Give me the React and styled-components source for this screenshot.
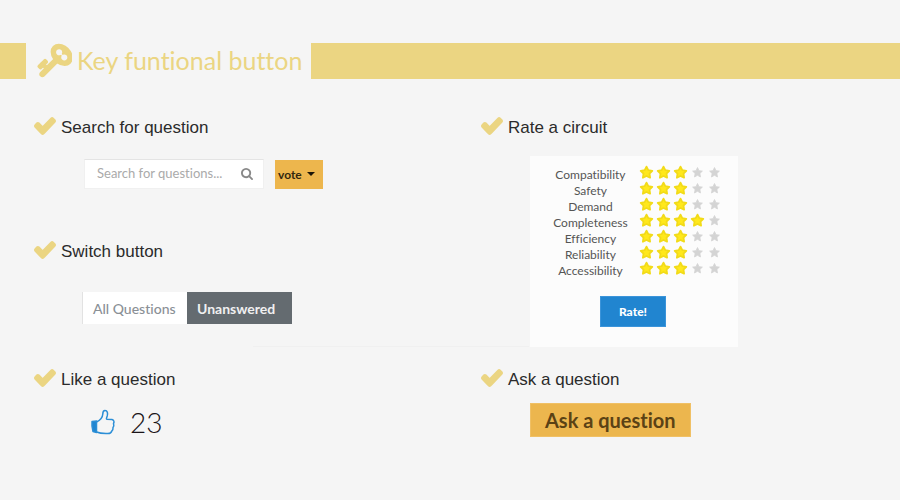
import React, { useState } from "react";
import styled, { createGlobalStyle } from "styled-components";

const GlobalStyle = createGlobalStyle`
  *, *::before, *::after { box-sizing: border-box; }
  body {
    margin: 0;
    background: #f5f5f5;
    color: #2b2b2b;
    font-family: Lato, "Liberation Sans", sans-serif;
    font-variant-ligatures: none;
  }
  button, input { font-family: inherit; font-variant-ligatures: none; }
`;

const Page = styled.main`
  padding-top: 43px;
`;

const Band = styled.header`
  display: flex;
  height: 36px;
  padding-left: 26px;
  background: #ebd582;
`;

const Title = styled.h1`
  display: flex;
  align-items: center;
  gap: 5px;
  margin: 0;
  padding: 0 9px 2px 10px;
  background: #f5f5f5;
  color: #ebd582;
  font-size: 25px;
  font-weight: 400;
  line-height: 34px;
  white-space: nowrap;
`;

const KeyIcon = styled.svg`
  width: 36px;
  height: 36px;
  fill: currentColor;
  stroke: currentColor;
  stroke-width: 80;
  stroke-linejoin: round;
`;

const Content = styled.div`
  display: grid;
  grid-template-columns: minmax(0, 16fr) minmax(0, 15fr);
  row-gap: 20px;
  padding: 36px 0 0 34px;
`;

const Column = styled.div`
  display: flex;
  flex-direction: column;
  align-items: flex-start;
`;

const Section = styled.section`
  display: flex;
  flex-direction: column;
  align-items: flex-start;
  height: ${(p) => p.$height || "auto"};
`;

const SectionTitle = styled.h2`
  display: flex;
  align-items: center;
  gap: 5px;
  margin: 0;
  font-family: "Liberation Sans", sans-serif;
  font-size: 17px;
  font-weight: 400;
  line-height: 26px;
  white-space: nowrap;
`;

const CheckIcon = styled.svg`
  width: 22px;
  height: 18px;
  margin-bottom: 4px;
  fill: #ebd582;
  stroke: #ebd582;
  stroke-width: 130;
  stroke-linejoin: round;
`;

const Controls = styled.div`
  display: flex;
  align-items: center;
  gap: ${(p) => p.$gap || "0"};
  margin: ${(p) => p.$top} 0 0 ${(p) => p.$left};
`;

const SearchBox = styled.div`
  display: flex;
  align-items: center;
  width: 180px;
  height: 30px;
  padding-right: 10px;
  background: #fff;
  border: 1px solid #f0f0f0;
  border-top-color: #e4e4e4;
`;

const SearchInput = styled.input`
  flex: 1;
  min-width: 0;
  padding: 0 0 2px 12px;
  border: 0;
  outline: 0;
  background: transparent;
  color: #555;
  font-size: 13px;
  &::placeholder { color: #aaa; opacity: 1; }
`;

const SearchButton = styled.button`
  display: flex;
  padding: 0;
  border: 0;
  background: transparent;
  svg { width: 12px; height: 12px; fill: #888; }
`;

const VoteButton = styled.button`
  display: flex;
  align-items: center;
  gap: 5px;
  width: 48px;
  height: 29px;
  padding: 0 3px;
  border: 0;
  background: #edb64d;
  color: #33280f;
  font-size: 12px;
  font-weight: 700;
  svg { width: 8px; height: 4px; fill: #1c1608; }
`;

const Toggle = styled.button`
  height: 32px;
  padding: 0 10px;
  border: 0;
  border-left: ${(p) => (p.$active ? "0" : "1px solid #e2e2e2")};
  width: 105px;
  background: ${(p) => (p.$active ? "#646b70" : "#fff")};
  color: ${(p) => (p.$active ? "#f0f0f0" : "#8a9096")};
  font-size: 14px;
  font-weight: ${(p) => (p.$active ? 700 : 500)};
  text-align: left;
  white-space: nowrap;
`;

const LikeButton = styled.button`
  display: flex;
  padding: 0;
  border: 0;
  background: transparent;
  svg { width: 26px; height: 26px; }
`;

const LikeCount = styled.output`
  color: #1a1418;
  font-size: 28px;
  font-weight: 300;
  line-height: 34px;
`;

const Divider = styled.hr`
  width: 276px;
  height: 1px;
  margin: 0 0 0 219px;
  border: 0;
  background: #f0f0f0;
`;

const RateCard = styled.form`
  display: flex;
  flex-direction: column;
  align-items: center;
  gap: 19px;
  width: 208px;
  height: 191px;
  margin: 15px 0 0 49px;
  padding: 9px 15px 0 13px;
  background: #fcfcfc;
`;

const RateTable = styled.table`
  width: 100%;
  border-collapse: collapse;
  tr { height: 16px; }
  td, th { padding: 0; }
`;

const Criterion = styled.th`
  width: 95px;
  color: #555;
  font-size: 12px;
  font-weight: 400;
  line-height: 16px;
  text-align: center;
  > span { display: block; height: 16px; padding-top: 2px; }
`;

const Stars = styled.div`
  display: flex;
  justify-content: flex-end;
  height: 16px;
`;

const StarLabel = styled.label`
  display: grid;
  width: 17px;
  height: 15px;
  place-items: center;
  > * { grid-area: 1 / 1; }
  svg { width: 15px; height: 15px; }
`;

const StarRadio = styled.input`
  appearance: none;
  width: 15px;
  height: 15px;
  margin: 0;
`;

const RateButton = styled.button`
  width: 66px;
  height: 31px;
  border: 1px solid #3b94da;
  background: #2185d0;
  color: #fff;
  font-size: 12px;
  font-weight: 900;
`;

const AskButton = styled.button`
  height: 34px;
  padding: 0 14px;
  border: 1px solid #f0c065;
  background: #ecb64e;
  color: #5b4215;
  font-size: 20px;
  font-weight: 700;
  white-space: nowrap;
`;

function Heading({ children }) {
  return (
    <SectionTitle>
      <CheckIcon viewBox="56 269 1680 1318" preserveAspectRatio="none" aria-hidden="true">
        <path d="M1671 566q0 40-28 68l-724 724-136 136q-28 28-68 28t-68-28l-136-136-362-362q-28-28-28-68t28-68l136-136q28-28 68-28t68 28l294 295 656-657q28-28 68-28t68 28l136 136q28 28 28 68z" />
      </CheckIcon>
      {children}
    </SectionTitle>
  );
}

function Star({ on }) {
  return (
    <svg viewBox="0 0 15 15" aria-hidden="true">
      <path
        d={
          on
            ? "M7.500 1.600 9.300 5.100 13.300 5.800 10.500 8.700 11.100 12.700 7.500 11 3.900 12.700 4.500 8.700 1.700 5.800 5.700 5.100Z"
            : "M7.500 2.500 9 5.700 12.400 6.100 9.900 8.500 10.500 12 7.500 10.300 4.500 12 5.100 8.500 2.600 6.100 6 5.700Z"
        }
        fill={on ? "#ffe81c" : "#d4d4d4"}
        stroke={on ? "#f2db18" : "#d4d4d4"}
        strokeWidth={on ? 1.800 : 0.800}
        strokeLinejoin="round"
      />
    </svg>
  );
}

const initialRatings = {
  Compatibility: 3,
  Safety: 3,
  Demand: 3,
  Completeness: 4,
  Efficiency: 3,
  Reliability: 3,
  Accessibility: 3,
};

export default function App() {
  const [ratings, setRatings] = useState(initialRatings);
  const [filter, setFilter] = useState("Unanswered");
  return (
    <Page>
      <GlobalStyle />
      <Band>
        <Title>
          <KeyIcon viewBox="0 0 1792 1792" aria-hidden="true">
            <path
              transform="translate(1792 0) scale(-1 1)"
              d="M832 512q0-80-56-136t-136-56-136 56-56 136q0 42 19 83-41-19-83-19-80 0-136 56t-56 136 56 136 136 56 136-56 56-136q0-42-19-83 41 19 83 19 80 0 136-56t56-136zm851 704q0 17-49 66t-66 49q-9 0-28.500-16t-36.500-33-38.500-40-24.500-26l-96 96 220 220q28 28 28 68 0 42-39 81t-81 39q-40 0-68-28l-671-671q-176 131-365 131-163 0-265.500-102.500t-102.500-265.500q0-160 95-313t248-248 313-95q163 0 265.500 102.500t102.500 265.500q0 189-131 365l355 355 96-96q-3-3-26-24.500t-40-38.500-33-36.500-16-28.500q0-17 49-66t66-49q13 0 23 10 6 6 46 44.500t82 79.500 86.500 86 73 78 28.500 41z"
            />
          </KeyIcon>
          Key funtional button
        </Title>
      </Band>
      <Content>
        <Column>
          <Section $height="124px">
            <Heading>Search for question</Heading>
            <Controls $gap="11px" $top="18px" $left="50px">
              <SearchBox role="search">
                <SearchInput aria-label="Search for questions" placeholder="Search for questions..." />
                <SearchButton type="button" aria-label="Search">
                  <svg viewBox="64 128 1664 1664">
                    <path d="M1216 832q0-185-131.500-316.500t-316.500-131.500-316.500 131.500-131.500 316.500 131.500 316.500 316.500 131.500 316.500-131.500 131.500-316.500zm512 832q0 52-38 90t-90 38q-54 0-90-38l-343-342q-179 124-399 124-143 0-273.500-55.500t-225-150-150-225-55.500-273.500 55.500-273.500 150-225 225-150 273.500-55.500 273.500 55.500 225 150 150 225 55.500 273.500q0 220-124 399l343 343q37 37 37 90z" />
                  </svg>
                </SearchButton>
              </SearchBox>
              <VoteButton type="button" aria-haspopup="menu">
                vote
                <svg viewBox="0 0 8 4" aria-hidden="true">
                  <path d="M0 0H8L4 4Z" />
                </svg>
              </VoteButton>
            </Controls>
          </Section>
          <Section $height="107px">
            <Heading>Switch button</Heading>
            <Controls $top="27px" $left="48px">
              {["All Questions", "Unanswered"].map((name) => (
                <Toggle
                  key={name}
                  type="button"
                  $active={filter === name}
                  aria-pressed={filter === name}
                  onClick={() => setFilter(name)}
                >
                  {name}
                </Toggle>
              ))}
            </Controls>
          </Section>
          <Divider />
        </Column>
        <Section>
          <Heading>Rate a circuit</Heading>
          <RateCard onSubmit={(e) => e.preventDefault()}>
            <RateTable>
              <tbody>
                {Object.entries(ratings).map(([name, value]) => (
                  <tr key={name}>
                    <Criterion scope="row">
                      <span>{name}</span>
                    </Criterion>
                    <td>
                      <Stars role="radiogroup" aria-label={name}>
                        {[1, 2, 3, 4, 5].map((n) => (
                          <StarLabel key={n}>
                            <StarRadio
                              type="radio"
                              name={name}
                              value={n}
                              aria-label={`${n} of 5`}
                              checked={value === n}
                              onChange={() => setRatings({ ...ratings, [name]: n })}
                            />
                            <Star on={n <= value} />
                          </StarLabel>
                        ))}
                      </Stars>
                    </td>
                  </tr>
                ))}
              </tbody>
            </RateTable>
            <RateButton type="submit">Rate!</RateButton>
          </RateCard>
        </Section>
        <Column>
          <Section>
            <Heading>Like a question</Heading>
            <Controls $gap="14px" $top="12px" $left="56px">
              <LikeButton type="button" aria-label="Like">
                <svg viewBox="0 0 26 26" fill="none" stroke="#2b8ed6" strokeWidth="1.500" strokeLinejoin="round">
                  <path d="M2 12.500 6.500 12V23.500L3 22.500Q1.500 17 2 12.500Z" fill="#2185d0" />
                  <path d="M6.500 13C10 11.500 12.500 9 12.800 5 12.800 2.500 13.500 1.500 15 1.500 17.500 1.500 18 4.500 17.200 7 16.500 9 16 10 17 10.200L22 10.500C24 11 24.500 13 23.500 14.500 24 16 24 17.500 23 18.500 23.200 20.500 22.800 21.500 21.800 22 21.300 24 20 24.500 18 24.500 13 24.700 10 24.500 6.500 23" />
                </svg>
              </LikeButton>
              <LikeCount>23</LikeCount>
            </Controls>
          </Section>
        </Column>
        <Section>
          <Heading>Ask a question</Heading>
          <Controls $top="10px" $left="49px">
            <AskButton type="button">Ask a question</AskButton>
          </Controls>
        </Section>
      </Content>
    </Page>
  );
}
